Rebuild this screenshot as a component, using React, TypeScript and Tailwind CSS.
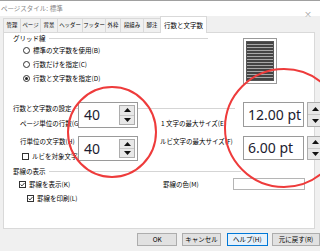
const jp = "font-['Noto_Sans_CJK_JP','Noto_Sans',sans-serif]";
const num = "font-['Noto_Sans','Open_Sans',sans-serif]";

const tabs: [string, string][] = [
  ["管理", "w-[17px]"],
  ["ページ", "w-[20px]"],
  ["背景", "w-[17px]"],
  ["ヘッダー", "w-[25px]"],
  ["フッター", "w-[23px]"],
  ["外枠", "w-[15px]"],
  ["段組み", "w-[23px]"],
  ["脚注", "w-[17px]"],
];

function Radio({ label, checked }: { label: string; checked?: boolean }) {
  return (
    <div className="flex h-[14px] items-center gap-[3px] pl-[19px]">
      <span className="flex size-[7px] items-center justify-center rounded-full border border-[#333] bg-white">
        {checked && <span className="size-[3px] rounded-full bg-[#222]" />}
      </span>
      <span>{label}</span>
    </div>
  );
}

function Check({ label }: { label: string }) {
  return (
    <span className="flex items-center gap-[3px]">
      <span className="flex size-[7px] items-center justify-center border border-[#333] bg-white">
        <svg width="5" height="5" viewBox="0 0 5 5">
          <path d="M0.6 2.6 L2 3.9 L4.5 1" fill="none" stroke="#222" strokeWidth="0.9" />
        </svg>
      </span>
      <span>{label}</span>
    </span>
  );
}

function GroupLabel({ label, width }: { label: string; width: string }) {
  return (
    <div className={`flex h-[12px] items-center pl-[9px] ${width}`}>
      <span>{label}</span>
      <span className="ml-[3px] h-px flex-1 bg-[#d5d5d5]" />
    </div>
  );
}

function Arrows({ className }: { className: string }) {
  return (
    <div className={`flex flex-col border border-[#adadad] bg-[#e8e8e8] ${className}`}>
      <div className="flex flex-1 items-center justify-center border-b border-[#c8c8c8]">
        <svg width="7" height="4" viewBox="0 0 7 4">
          <polygon points="0,4 3.5,0 7,4" fill="#111" />
        </svg>
      </div>
      <div className="flex flex-1 items-center justify-center">
        <svg width="7" height="4" viewBox="0 0 7 4">
          <polygon points="0,0 3.5,4 7,0" fill="#111" />
        </svg>
      </div>
    </div>
  );
}

export default function App() {
  return (
    <div className={`relative flex h-[251px] w-[320px] flex-col overflow-hidden bg-[#f0f0f0] text-[6.5px] leading-none text-black ${jp}`}>
      {/* title bar */}
      <div className="relative h-[16px] border-t border-[#a0a0a0] bg-white pl-[1px] pt-[4px] text-[#8a8a8a]">
        ページスタイル: 標準
        <span className="absolute right-[8px] top-[9px] text-[8px] text-[#999]">×</span>
      </div>

      {/* tabs */}
      <div className="flex h-[16px] items-end pl-[3px]">
        {tabs.map(([t, w]) => (
          <div
            key={t}
            className={`flex h-[14px] items-center justify-center whitespace-nowrap border-l border-t border-[#d9d9d9] text-[5.4px] ${w}`}
          >
            {t}
          </div>
        ))}
        <div className="relative z-10 -mb-px flex h-[17px] w-[47px] items-center justify-center border-x border-t border-[#d9d9d9] bg-white">
          行数と文字数
        </div>
      </div>

      {/* page */}
      <div className="flex">
        <div className="w-[3px]" />
        <div className="h-[197px] w-[312px] border border-[#d9d9d9] bg-white">
          <div className="flex h-[52px]">
            <div className="w-[204px]">
              <div className="flex h-[10px] items-center pl-[9px]">
                <span>グリッド線</span>
                <span className="ml-[3px] h-px flex-1 bg-[#d5d5d5]" />
              </div>
              <Radio label="標準の文字数を使用(B)" />
              <Radio label="行数だけを指定(C)" />
              <Radio label="行数と文字数を指定(D)" checked />
            </div>
            <div className="ml-[35px] mt-[5px] h-[46px] w-[34px] border border-[#9a9a9a] bg-white p-[2px]">
              <div className="h-full w-full border border-[#555] bg-[repeating-linear-gradient(0deg,#444_0px,#444_2px,#a8a8a8_2px,#a8a8a8_3px)]" />
            </div>
          </div>

          <div className="mt-[17px]">
            <GroupLabel label="行数と文字数の設定" width="w-[231px]" />
          </div>
          <div className="flex h-[18px] items-center pl-[16px]">
            <span className="w-[141px]">ページ単位の行数(G)</span>
            <span>1 文字の最大サイズ(E)</span>
          </div>
          <div className="flex h-[19px] items-center pl-[16px]">
            <span className="w-[141px]">行単位の文字数(H)</span>
            <span className="-ml-[1px]">ルビ文字の最大サイズ(F)</span>
          </div>
          <div className="flex h-[10px] items-center pl-[18px]">
            <span className="flex items-center gap-[3px]">
              <span className="size-[7px] border border-[#333] bg-white" />
              <span>ルビを対象文字列に合わせる</span>
            </span>
          </div>

          <div className="mt-[4px]">
            <GroupLabel label="罫線の表示" width="w-[237px]" />
          </div>
          <div className="flex h-[14px] items-center pl-[15px]">
            <span className="w-[144px]">
              <Check label="罫線を表示(K)" />
            </span>
            <span className="w-[70px]">罫線の色(M)</span>
            <span className="h-[12px] w-[72px] border border-[#b5b5b5] bg-white" />
          </div>
          <div className="flex h-[15px] items-center pl-[23px]">
            <Check label="罫線を印刷(L)" />
          </div>
        </div>
        <div className="flex-1" />
      </div>

      {/* buttons */}
      <div className="flex pl-[137px] pt-[4px]">
        <button className="h-[13px] w-[41px] border border-[#adadad] bg-[#e1e1e1]">OK</button>
        <button className="ml-[5px] h-[13px] w-[39px] border border-[#adadad] bg-[#e1e1e1]">キャンセル</button>
        <button className="ml-[6px] h-[13px] w-[42px] border border-[#0078d7] bg-[#e5f1fb]">ヘルプ(H)</button>
        <button className="ml-[4px] h-[13px] w-[48px] shrink-0 border border-[#adadad] bg-[#e1e1e1]">元に戻す(R)</button>
      </div>

      {/* magnified spin boxes */}
      <div className={`absolute left-[78px] top-[102px] flex h-[26px] w-[60px] items-center border border-[#9a9a9a] bg-white pl-[5px] text-[14px] text-[#1c1c30] ${num}`}>
        40
        <Arrows className="absolute right-[2px] top-[2px] h-[20px] w-[16px]" />
      </div>
      <div className={`absolute left-[78px] top-[136px] flex h-[25px] w-[60px] items-center border border-[#9a9a9a] bg-white pl-[5px] text-[14px] text-[#1c1c30] ${num}`}>
        40
        <Arrows className="absolute right-[2px] top-[2px] h-[19px] w-[16px]" />
      </div>
      <div className={`absolute left-[243px] top-[102px] flex h-[25px] w-[61px] items-center border border-[#9a9a9a] bg-white pl-[4px] text-[14px] text-[#1c1c30] ${num}`}>
        12.00 pt
      </div>
      <Arrows className="absolute left-[307px] top-[102px] h-[25px] w-[16px]" />
      <div className={`absolute left-[243px] top-[136px] flex h-[24px] w-[61px] items-center border border-[#9a9a9a] bg-white pl-[4px] text-[14px] text-[#1c1c30] ${num}`}>
        6.00 pt
      </div>
      <Arrows className="absolute left-[307px] top-[136px] h-[24px] w-[16px]" />

      {/* red annotation circles */}
      <svg className="pointer-events-none absolute left-0 top-0" width="320" height="251">
        <ellipse cx="112" cy="132" rx="44" ry="45" fill="none" stroke="#ee3b3b" strokeWidth="2" />
        <ellipse cx="284" cy="128" rx="59" ry="59" fill="none" stroke="#ee3b3b" strokeWidth="2" />
      </svg>
    </div>
  );
}
